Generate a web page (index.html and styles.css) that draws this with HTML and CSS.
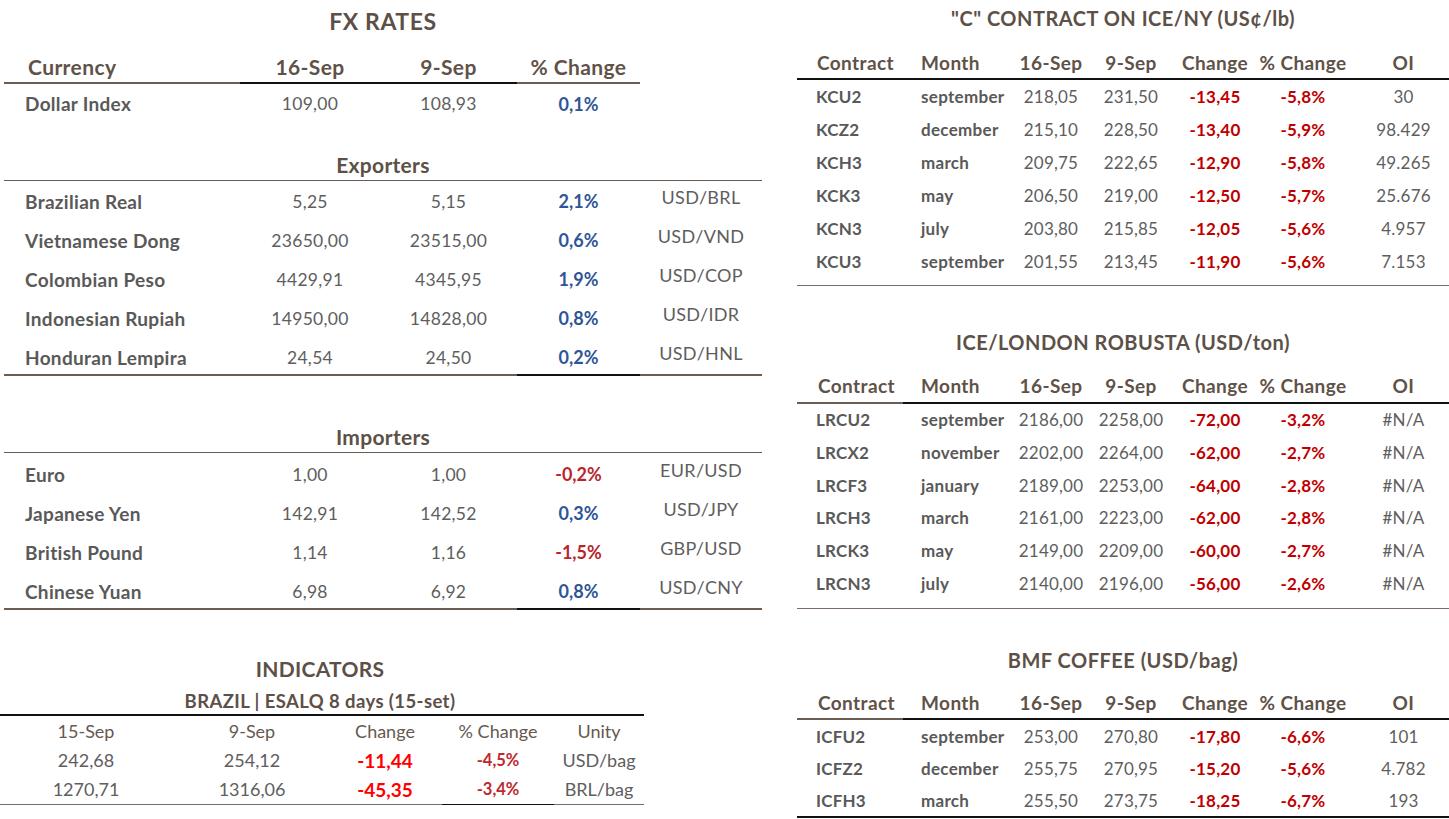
FILE: index.html
```html
<!DOCTYPE html>
<html>
<head>
<meta charset="utf-8">
<link rel="stylesheet" href="styles.css">
</head>
<body>
<div class="page">
  <div class="left">
    <div class="fx">
      <h2 class="title fx-title">FX RATES</h2>
      <div class="fx-row fx-head">
        <div class="c1 hb">Currency</div><div class="c hk">16-Sep</div><div class="c hk">9-Sep</div><div class="c hb">% Change</div><div class="c"></div>
      </div>
      <div class="fx-row dollar">
        <div class="c1 name">Dollar Index</div><div class="c val">109,00</div><div class="c val">108,93</div><div class="c pos">0,1%</div><div class="c"></div>
      </div>
      <h3 class="group exp">Exporters</h3>
      <div class="fx-row"><div class="c1 name">Brazilian Real</div><div class="c val">5,25</div><div class="c val">5,15</div><div class="c pos">2,1%</div><div class="c pair">USD/BRL</div></div>
      <div class="fx-row"><div class="c1 name">Vietnamese Dong</div><div class="c val">23650,00</div><div class="c val">23515,00</div><div class="c pos">0,6%</div><div class="c pair">USD/VND</div></div>
      <div class="fx-row"><div class="c1 name">Colombian Peso</div><div class="c val">4429,91</div><div class="c val">4345,95</div><div class="c pos">1,9%</div><div class="c pair">USD/COP</div></div>
      <div class="fx-row"><div class="c1 name">Indonesian Rupiah</div><div class="c val">14950,00</div><div class="c val">14828,00</div><div class="c pos">0,8%</div><div class="c pair">USD/IDR</div></div>
      <div class="fx-row last"><div class="c1 name">Honduran Lempira</div><div class="c val">24,54</div><div class="c val">24,50</div><div class="c pos lk">0,2%</div><div class="c pair">USD/HNL</div></div>
      <h3 class="group imp">Importers</h3>
      <div class="fx-row first"><div class="c1 name">Euro</div><div class="c val">1,00</div><div class="c val">1,00</div><div class="c neg">-0,2%</div><div class="c pair">EUR/USD</div></div>
      <div class="fx-row"><div class="c1 name">Japanese Yen</div><div class="c val">142,91</div><div class="c val">142,52</div><div class="c pos">0,3%</div><div class="c pair">USD/JPY</div></div>
      <div class="fx-row"><div class="c1 name">British Pound</div><div class="c val">1,14</div><div class="c val">1,16</div><div class="c neg">-1,5%</div><div class="c pair">GBP/USD</div></div>
      <div class="fx-row last"><div class="c1 name">Chinese Yuan</div><div class="c val">6,98</div><div class="c val">6,92</div><div class="c pos lk">0,8%</div><div class="c pair">USD/CNY</div></div>
    </div>
    <div class="ind">
      <h2 class="title ind-title">INDICATORS</h2>
      <div class="ind-sub">BRAZIL | ESALQ 8 days (15-set)</div>
      <div class="ind-row ind-head"><div>15-Sep</div><div>9-Sep</div><div>Change</div><div>% Change</div><div>Unity</div></div>
      <div class="ind-row"><div>242,68</div><div>254,12</div><div class="bred">-11,44</div><div class="dred">-4,5%</div><div>USD/bag</div></div>
      <div class="ind-row ind-last"><div class="lg">1270,71</div><div class="lg">1316,06</div><div class="bred lg">-45,35</div><div class="dred lk">-3,4%</div><div class="lg">BRL/bag</div></div>
    </div>
  </div>

  <div class="right">
    <section class="fut kc">
      <h2 class="title ftitle">"C" CONTRACT ON ICE/NY (US¢/lb)</h2>
      <div class="frow fhead allblack"><div class="f1">Contract</div><div class="f2">Month</div><div>16-Sep</div><div>9-Sep</div><div>Change</div><div>% Change</div><div class="f7">OI</div></div>
      <div class="fbody">
        <div class="frow"><div class="f1">KCU2</div><div class="f2">september</div><div>218,05</div><div>231,50</div><div class="red">-13,45</div><div class="red">-5,8%</div><div class="f7">30</div></div>
        <div class="frow"><div class="f1">KCZ2</div><div class="f2">december</div><div>215,10</div><div>228,50</div><div class="red">-13,40</div><div class="red">-5,9%</div><div class="f7">98.429</div></div>
        <div class="frow"><div class="f1">KCH3</div><div class="f2">march</div><div>209,75</div><div>222,65</div><div class="red">-12,90</div><div class="red">-5,8%</div><div class="f7">49.265</div></div>
        <div class="frow"><div class="f1">KCK3</div><div class="f2">may</div><div>206,50</div><div>219,00</div><div class="red">-12,50</div><div class="red">-5,7%</div><div class="f7">25.676</div></div>
        <div class="frow"><div class="f1">KCN3</div><div class="f2">july</div><div>203,80</div><div>215,85</div><div class="red">-12,05</div><div class="red">-5,6%</div><div class="f7">4.957</div></div>
        <div class="frow"><div class="f1">KCU3</div><div class="f2">september</div><div>201,55</div><div>213,45</div><div class="red">-11,90</div><div class="red">-5,6%</div><div class="f7">7.153</div></div>
      </div>
    </section>
    <section class="fut rob">
      <h2 class="title ftitle">ICE/LONDON ROBUSTA (USD/ton)</h2>
      <div class="frow fhead"><div class="f1">Contract</div><div class="f2">Month</div><div>16-Sep</div><div>9-Sep</div><div>Change</div><div>% Change</div><div class="f7">OI</div></div>
      <div class="fbody">
        <div class="frow"><div class="f1">LRCU2</div><div class="f2">september</div><div>2186,00</div><div>2258,00</div><div class="red">-72,00</div><div class="red">-3,2%</div><div class="f7">#N/A</div></div>
        <div class="frow"><div class="f1">LRCX2</div><div class="f2">november</div><div>2202,00</div><div>2264,00</div><div class="red">-62,00</div><div class="red">-2,7%</div><div class="f7">#N/A</div></div>
        <div class="frow"><div class="f1">LRCF3</div><div class="f2">january</div><div>2189,00</div><div>2253,00</div><div class="red">-64,00</div><div class="red">-2,8%</div><div class="f7">#N/A</div></div>
        <div class="frow"><div class="f1">LRCH3</div><div class="f2">march</div><div>2161,00</div><div>2223,00</div><div class="red">-62,00</div><div class="red">-2,8%</div><div class="f7">#N/A</div></div>
        <div class="frow"><div class="f1">LRCK3</div><div class="f2">may</div><div>2149,00</div><div>2209,00</div><div class="red">-60,00</div><div class="red">-2,7%</div><div class="f7">#N/A</div></div>
        <div class="frow"><div class="f1">LRCN3</div><div class="f2">july</div><div>2140,00</div><div>2196,00</div><div class="red">-56,00</div><div class="red">-2,6%</div><div class="f7">#N/A</div></div>
      </div>
    </section>
    <section class="fut bmf">
      <h2 class="title ftitle">BMF COFFEE (USD/bag)</h2>
      <div class="frow fhead"><div class="f1">Contract</div><div class="f2">Month</div><div>16-Sep</div><div>9-Sep</div><div>Change</div><div>% Change</div><div class="f7">OI</div></div>
      <div class="fbody">
        <div class="frow"><div class="f1">ICFU2</div><div class="f2">september</div><div>253,00</div><div>270,80</div><div class="red">-17,80</div><div class="red">-6,6%</div><div class="f7">101</div></div>
        <div class="frow"><div class="f1">ICFZ2</div><div class="f2">december</div><div>255,75</div><div>270,95</div><div class="red">-15,20</div><div class="red">-5,6%</div><div class="f7">4.782</div></div>
        <div class="frow"><div class="f1">ICFH3</div><div class="f2">march</div><div>255,50</div><div>273,75</div><div class="red">-18,25</div><div class="red">-6,7%</div><div class="f7">193</div></div>
      </div>
    </section>
  </div>
</div>
</body>
</html>
```
FILE: styles.css
```css
* { box-sizing: border-box; }
html, body { margin: 0; padding: 0; background: #ffffff; }
body {
  font-family: Lato, "Open Sans", "Liberation Sans", sans-serif;
  color: #595959;
  width: 1449px;
  height: 819px;
  overflow: hidden;
}
.page { display: flex; width: 1449px; }
.left { width: 797px; }
.right { width: 652px; }

.title {
  margin: 0;
  text-align: center;
  color: #5d5047;
  font-weight: 700;
}

/* FX */
.fx { margin-left: 4px; width: 758px; }
.fx-title { font-size: 23px; letter-spacing: 0.6px; height: 42px; line-height: 42px; }
.fx-row {
  display: grid;
  grid-template-columns: 236px 140px 137px 123px 122px;
}
.fx-row > div { white-space: nowrap; }
.c { text-align: center; }
.fx-head > div {
  height: 42px;
  padding-top: 12px;
  line-height: 26px;
  font-size: 21px;
  letter-spacing: 0.4px;
  font-weight: 700;
  color: #5f5248;
  border-bottom: 2px solid transparent;
}
.fx-head .c1 { padding-left: 24px; }
.fx-head .hb { border-bottom-color: #6b5d52; }
.fx-head .hk { border-bottom-color: #111111; }
.fx-head > div:last-child { border-bottom: none; }
.dollar > div { height: 40px; line-height: 40px; }
.fx-row:not(.fx-head):not(.dollar) > div { height: 39px; padding-top: 2px; line-height: 37px; }
.fx-row:not(.fx-head):not(.dollar) > div.pair { padding-top: 0; line-height: 33px; }
.fx-row.first { margin-top: 1px; }
.fx-row.last > div { border-bottom: 2px solid #6b5d52; }
.fx-row.last > div.lk { border-bottom-color: #111111; }
.name { padding-left: 21px; font-size: 19px; letter-spacing: 0.3px; font-weight: 700; color: #595959; }
.val { font-size: 17.5px; letter-spacing: 0.3px; color: #5e5e5e; }
.pos { font-size: 18px; font-weight: 700; color: #2f5597; }
.neg { font-size: 18px; font-weight: 700; color: #b8262b; }
.pair { font-size: 18px; letter-spacing: 0.3px; color: #5e5e5e; }
.group {
  margin: 0;
  text-align: center;
  font-size: 21px;
  letter-spacing: 0.3px;
  font-weight: 700;
  color: #5d5047;
  height: 31px;
  line-height: 30px;
  border-bottom: 1px solid #6b5d52;
}
.group.exp { margin-top: 26px; }
.group.imp { margin-top: 46px; }

/* Indicators */
.ind { width: 648px; margin-left: -4px; }
.ind-title { font-size: 21px; letter-spacing: 0.3px; height: 34px; line-height: 34px; margin-top: 42px; }
.ind-sub {
  text-align: center;
  font-size: 18.5px;
  letter-spacing: 0.4px;
  font-weight: 700;
  color: #5d5047;
  height: 30px;
  line-height: 30px;
  border-bottom: 2px solid #111111;
}
.ind-row {
  display: grid;
  grid-template-columns: 180px 152px 114px 112px 90px;
  text-align: center;
  font-size: 18px;
  font-weight: 400;
  color: #5e5e5e;
}
.ind-row > div { height: 29px; line-height: 29px; white-space: nowrap; }
.ind-head > div { height: 30px; line-height: 30px; color: #66594f; }
.ind-last > div { height: 30px; }
.bred { color: #ff0000; font-weight: 700; font-size: 19px; }
.dred { color: #c0282b; font-weight: 700; font-size: 16.5px; }
.ind-last .lg { border-bottom: 1px solid #7a6e66; }
.ind-last .lk { border-bottom: 1px solid #111111; }

/* Futures */
.ftitle { font-size: 20px; letter-spacing: 0.5px; height: 36px; line-height: 36px; }
.rob .ftitle { margin-top: 38px; }
.bmf .ftitle { margin-top: 33px; }
.frow {
  display: grid;
  grid-template-columns: 106px 111px 74px 86px 82px 94px 99px;
  text-align: center;
  font-size: 17px;
  letter-spacing: 0.2px;
  color: #5e5e5e;
}
.frow > div { white-space: nowrap; }
.frow .f1 { text-align: left; padding-left: 19px; font-weight: 700; color: #595959; }
.frow .f2 { text-align: left; padding-left: 18px; font-weight: 700; color: #595959; letter-spacing: 0.3px; }
.frow .f7 { padding-left: 8px; }
.fhead > div {
  height: 44px;
  padding-top: 13px;
  line-height: 26px;
  font-size: 19px;
  letter-spacing: 0.4px;
  font-weight: 700;
  color: #5f5248;
  border-bottom: 2px solid #111111;
}
.fhead .f1, .fhead .f2 { color: #5f5248; letter-spacing: 0.4px; }
.fhead .f1 { border-bottom-color: #6b5d52; padding-left: 21px; }
.allblack .f1 { border-bottom-color: #111111; padding-left: 20px; }
.kc .fhead > div { padding-top: 14px; }
.bmf .fhead > div { height: 42px; padding-top: 12px; }
.fbody .frow > div { height: 33px; line-height: 33px; }
.rob .fbody .frow > div { height: 32.8px; line-height: 31px; }
.red { color: #c00000; font-weight: 700; }
.kc .fbody { padding-bottom: 7px; border-bottom: 1px solid #7a6e66; }
.rob .fbody { padding-bottom: 7px; border-bottom: 1px solid #7a6e66; }
.bmf .fbody .frow > div { height: 32px; padding-top: 1px; line-height: 31px; }
.bmf .fbody { border-bottom: 2px solid #111111; }
```
